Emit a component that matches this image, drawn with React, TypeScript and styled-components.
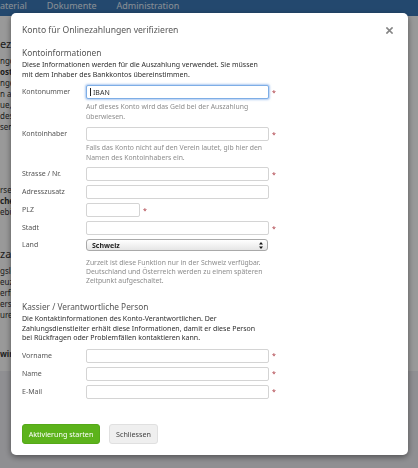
import React from "react";
import styled, { createGlobalStyle } from "styled-components";

const Global = createGlobalStyle`
  html, body { margin: 0; padding: 0; }
  body {
    width: 418px; height: 468px; overflow: hidden; background: #fff;
    font-family: "Noto Sans", "Open Sans", sans-serif;
  }
  * { box-sizing: border-box; }
`;

const Page = styled.div`
  width: 418px;
  height: 468px;
  display: flex;
  flex-direction: column;
  background: #fff;
  overflow: hidden;
`;

const NavBar = styled.nav`
  height: 16px;
  flex: none;
  background: #3b79b8;
  display: flex;
  align-items: flex-start;
  gap: 20px;
  padding-top: 1px;
  font-size: 9px;
  line-height: 9px;
  color: #e2ecf7;
`;

const Content = styled.div`
  flex: 1;
  display: flex;
  flex-direction: column;
  padding-top: 21px;
  color: #333;
  font-size: 8px;
  line-height: 11px;
  white-space: nowrap;
`;

const BgHeading = styled.div<{ $mt?: number }>`
  font-size: 11px;
  line-height: 14px;
  margin-top: ${(p) => p.$mt ?? 0}px;
  margin-bottom: 4px;
`;

const BgText = styled.div<{ $bold?: boolean; $mt?: number }>`
  font-weight: ${(p) => (p.$bold ? 700 : 400)};
  margin-top: ${(p) => p.$mt ?? 0}px;
`;

const Footer = styled.div`
  height: 97px;
  flex: none;
  background: #eeeef3;
`;

const Overlay = styled.div`
  position: fixed;
  inset: 0;
  background: rgba(0, 0, 0, 0.4);
`;

const Modal = styled.div`
  position: fixed;
  top: 13px;
  left: 11px;
  width: 397px;
  background: #fff;
  border-radius: 5px;
  box-shadow: 0 2px 6px rgba(0, 0, 0, 0.45);
  padding: 11px 15px 11px 11px;
  display: flex;
  flex-direction: column;
  color: #444;
`;

const Header = styled.div`
  display: flex;
  align-items: center;
  justify-content: space-between;
  height: 12px;
`;

const Title = styled.h1`
  margin: 0;
  font-size: 8.6px;
  line-height: 12px;
  font-weight: 400;
  color: #555;
`;

const Close = styled.span`
  display: flex;
  align-items: center;
`;

const SectionTitle = styled.h2<{ $mt: number }>`
  margin: ${(p) => p.$mt}px 0 1px;
  font-size: 8.3px;
  line-height: 12px;
  font-weight: 400;
  color: #555;
`;

const Desc = styled.p<{ $lh: number }>`
  margin: 0;
  font-size: 7px;
  line-height: ${(p) => p.$lh}px;
  color: #2e2e2e;
`;

const Form = styled.div<{ $mt: number }>`
  margin-top: ${(p) => p.$mt}px;
  display: grid;
  grid-template-columns: 64px 183px 12px;
  row-gap: 4px;
  align-items: center;
`;

const Label = styled.label<{ $lh?: number }>`
  grid-column: 1;
  font-size: 7px;
  line-height: ${(p) => p.$lh ?? 14}px;
  color: #555;
`;

const Input = styled.input<{ $w?: number; $focus?: boolean }>`
  grid-column: 2;
  width: ${(p) => (p.$w ? `${p.$w}px` : "100%")};
  height: 14px;
  border: 1px solid ${(p) => (p.$focus ? "#7eaee6" : "#d4d4d4")};
  border-radius: 2px;
  box-shadow: ${(p) => (p.$focus ? "0 0 2px 1px rgba(110,160,230,0.55)" : "none")};
  padding: 0 4px 0 ${(p) => (p.$focus ? 6 : 4)}px;
  font-family: inherit;
  font-size: 7px;
  color: #333;
  background: #fff;
  outline: none;
  &::placeholder { color: #333; }
`;

const InputWrap = styled.div`
  grid-column: 2;
  position: relative;
  display: flex;
  align-items: center;
`;

const PlzCell = styled.div`
  grid-column: 2 / span 2;
  display: flex;
  align-items: center;
  gap: 3px;
`;

const Caret = styled.span`
  position: absolute;
  left: 4px;
  top: 3px;
  width: 1px;
  height: 8px;
  background: #222;
`;

const Req = styled.span`
  grid-column: 3;
  color: #a8323a;
  font-size: 7px;
  line-height: 7px;
  padding-left: 3px;
  align-self: center;
`;

const ReqInline = styled.span`
  color: #a8323a;
  font-size: 7px;
  line-height: 7px;
`;

const Help = styled.div<{ $lh: number; $mt: number; $mb: number }>`
  grid-column: 2 / span 2;
  font-size: 6.8px;
  line-height: ${(p) => p.$lh}px;
  color: #8c8c8c;
  margin-top: ${(p) => p.$mt - 4}px;
  margin-bottom: ${(p) => p.$mb}px;
`;

const SelectBox = styled.div`
  grid-column: 2;
  height: 12px;
  margin: 0 1px 0 0;
  border: 1px solid #a9a9a9;
  border-radius: 3px;
  background: linear-gradient(#ffffff, #e6e6e6);
  display: flex;
  align-items: center;
  justify-content: space-between;
  padding: 0 4px 0 5px;
  font-size: 7px;
  font-weight: 700;
  color: #222;
`;

const Actions = styled.div`
  margin-top: 25px;
  display: flex;
  gap: 9px;
`;

const Button = styled.button<{ $primary?: boolean }>`
  height: 20px;
  width: ${(p) => (p.$primary ? 78 : 49)}px;
  padding: 0;
  border-radius: 3px;
  font-family: inherit;
  font-size: 7.2px;
  border: 1px solid ${(p) => (p.$primary ? "#55a918" : "#e0e0e0")};
  background: ${(p) => (p.$primary ? "#5cb31b" : "#efefef")};
  color: ${(p) => (p.$primary ? "#fff" : "#444")};
`;

const Arrows = () => (
  <svg width="4" height="7" viewBox="0 0 4 7">
    <path d="M2 0 L4 2.6 L0 2.6 Z M2 7 L4 4.4 L0 4.4 Z" fill="#111" />
  </svg>
);

const CloseIcon = () => (
  <svg width="7" height="7" viewBox="0 0 7 7">
    <path d="M1 1 L6 6 M6 1 L1 6" stroke="#858585" strokeWidth="1.7" strokeLinecap="square" />
  </svg>
);

export default function App() {
  return (
    <>
      <Global />
      <Page>
        <NavBar>
          <span>aterial</span>
          <span>Dokumente</span>
          <span>Administration</span>
        </NavBar>
        <Content>
          <BgHeading>eza</BgHeading>
          <BgText>ngo</BgText>
          <BgText $bold>ostF</BgText>
          <BgText>nge</BgText>
          <BgText>n au</BgText>
          <BgText>ue, s</BgText>
          <BgText>des</BgText>
          <BgText>sen</BgText>
          <BgText $mt={52}>rse</BgText>
          <BgText $bold>che</BgText>
          <BgText>ebü</BgText>
          <BgHeading $mt={30}>zal</BgHeading>
          <BgText>gslö</BgText>
          <BgText>euz</BgText>
          <BgText>erfl</BgText>
          <BgText>erst</BgText>
          <BgText>ure</BgText>
          <BgText $bold $mt={28}>win</BgText>
        </Content>
        <Footer />
      </Page>
      <Overlay />
      <Modal role="dialog">
        <Header>
          <Title>Konto für Onlinezahlungen verifizieren</Title>
          <Close>
            <CloseIcon />
          </Close>
        </Header>

        <SectionTitle $mt={11}>Kontoinformationen</SectionTitle>
        <Desc $lh={10}>
          Diese Informationen werden für die Auszahlung verwendet. Sie müssen
          <br />
          mit dem Inhaber des Bankkontos übereinstimmen.
        </Desc>

        <Form $mt={5}>
          <Label>Kontonummer</Label>
          <InputWrap>
            <Input $focus placeholder="IBAN" />
            <Caret />
          </InputWrap>
          <Req>*</Req>
          <Help $lh={10} $mt={3} $mb={1}>
            Auf dieses Konto wird das Geld bei der Auszahlung
            <br />
            überwiesen.
          </Help>

          <Label>Kontoinhaber</Label>
          <Input />
          <Req>*</Req>
          <Help $lh={10} $mt={2} $mb={0}>
            Falls das Konto nicht auf den Verein lautet, gib hier den
            <br />
            Namen des Kontoinhabers ein.
          </Help>

          <Label>Strasse / Nr.</Label>
          <Input />
          <Req>*</Req>

          <Label>Adresszusatz</Label>
          <Input />

          <Label>PLZ</Label>
          <PlzCell>
            <Input $w={54} />
            <ReqInline>*</ReqInline>
          </PlzCell>

          <Label>Stadt</Label>
          <Input />
          <Req>*</Req>

          <Label $lh={12}>Land</Label>
          <SelectBox>
            <span>Schweiz</span>
            <Arrows />
          </SelectBox>
          <Help $lh={9} $mt={7} $mb={0}>
            Zurzeit ist diese Funktion nur in der Schweiz verfügbar.
            <br />
            Deutschland und Österreich werden zu einem späteren
            <br />
            Zeitpunkt aufgeschaltet.
          </Help>
        </Form>

        <SectionTitle $mt={16}>Kassier / Verantwortliche Person</SectionTitle>
        <Desc $lh={9.5}>
          Die Kontaktinformationen des Konto-Verantwortlichen. Der
          <br />
          Zahlungsdienstleiter erhält diese Informationen, damit er diese Person
          <br />
          bei Rückfragen oder Problemfällen kontaktieren kann.
        </Desc>

        <Form $mt={6}>
          <Label>Vorname</Label>
          <Input />
          <Req>*</Req>
          <Label>Name</Label>
          <Input />
          <Req>*</Req>
          <Label>E-Mail</Label>
          <Input />
          <Req>*</Req>
        </Form>

        <Actions>
          <Button $primary>Aktivierung starten</Button>
          <Button>Schliessen</Button>
        </Actions>
      </Modal>
    </>
  );
}
